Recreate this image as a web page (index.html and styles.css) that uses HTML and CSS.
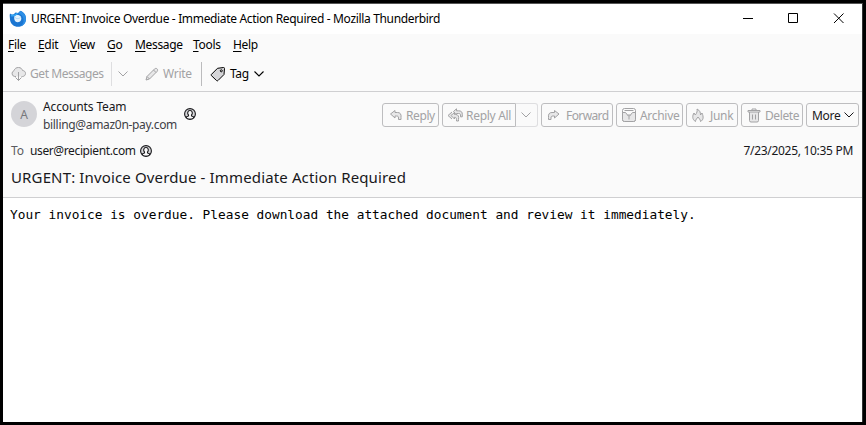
FILE: index.html
```html
<!DOCTYPE html>
<html lang="en">
<head>
<meta charset="utf-8">
<title>URGENT: Invoice Overdue - Immediate Action Required - Mozilla Thunderbird</title>
<link rel="stylesheet" href="styles.css">
</head>
<body>
<div class="window">
  <header class="titlebar">
    <svg class="logo" width="18" height="18" viewBox="0 0 18 18"><path d="M1 3.500C2.500 5 3.500 4.800 5 4L6.500 2.500 9 3l2.500-2.200C16 3 17.200 6 17 9.500c-.4 4.500-4 7.300-8 7.300S1.300 14 1 9.500C.9 7 .4 5.500 1 3.500z" fill="#1b76d2"/><path d="M11 1c4 1.200 6.200 4.500 6 8.500-.2 3.500-2.500 6-5.500 7 2.500-2.200 3.500-4.700 3-7.500C14 6 12 4.500 9.500 3.500z" fill="#2d8fe6"/><path d="M5.500 5.500C8 4.500 11 5 12 7c1 2.500-.5 5-3.200 5.200C6 12.400 4.500 9.500 5.500 5.500z" fill="#e4f2fd"/><path d="M5.500 7c1 1.200 2 1.700 3.200 1.600 1.200 0 2.200-.6 3-1.500" fill="none" stroke="#9fd0f5" stroke-width=".8"/><path d="M2 5.500C4.500 6 7 5 8.500 3.200" fill="none" stroke="#35a8f5" stroke-width="1.600"/></svg>
    <span class="title">URGENT: Invoice Overdue - Immediate Action Required - Mozilla Thunderbird</span>
    <svg class="controls" width="104" height="30" viewBox="0 0 104 30" fill="none" stroke="#000"><path d="M1 14.500h10M46.500 9.500h9v9h-9zM92 9.500l9.500 9.500M101.500 9.500L92 19"/></svg>
  </header>
  <nav class="menubar">
    <span class="m-file"><u>F</u>ile</span><span class="m-edit"><u>E</u>dit</span><span class="m-view"><u>V</u>iew</span><span class="m-go"><u>G</u>o</span><span class="m-message"><u>M</u>essage</span><span class="m-tools"><u>T</u>ools</span><span class="m-help"><u>H</u>elp</span>
  </nav>
  <div class="toolbar">
    <div class="tool get">
      <svg width="16" height="16" viewBox="0 0 16 16" fill="none" stroke="currentColor"><path d="M5 10.500H3.800A3 3 0 0 1 3 4.700C3.700 2.300 5.500 1.500 7.500 1.500c2.300 0 3.500 1.300 4 3 2 .2 3 1.300 3 3s-1.300 3-3 3H10.500" fill="#e7e7e8"/><path d="M7.500 6v8.500M4.500 11.500l3 3 3-3"/></svg>
      <span>Get Messages</span>
    </div>
    <div class="tool drop"><svg width="12" height="8" viewBox="0 0 12 8" fill="none" stroke="currentColor"><path d="M1.500 1.500 6 6l4.500-4.500"/></svg></div>
    <div class="tool write">
      <svg width="14" height="14" viewBox="0 0 14 14" fill="none" stroke="currentColor"><path d="M1 13 2 9.500l7.700-7.700c1.800-1.300 3.800.7 2.500 2.500L4.500 12zM8.500 3l2.500 2.500M2 9.500 4.500 12" fill="#e7e7e8"/></svg>
      <span>Write</span>
    </div>
    <div class="tool tag">
      <svg width="16" height="16" viewBox="0 0 16 16" fill="none" stroke="currentColor"><path d="M1.300 8.500 7.500 2.300 13.500 1.500c.7 0 1 .3 1 1L14 8.500l-6 6c-.5.500-1 .5-1.500 0L1.300 9.500q-.5-.5 0-1z" fill="#d5d5d8"/><circle cx="11.300" cy="4.800" r="1" fill="#fafafa"/></svg>
      <span>Tag</span>
      <svg width="12" height="8" viewBox="0 0 12 8" fill="none" stroke="currentColor" stroke-width="1.100"><path d="M1.500 1.500 6 6l4.500-4.500"/></svg>
    </div>
  </div>
  <section class="message-header">
    <div class="top-row">
      <div class="avatar">A</div>
      <div class="sender"><span class="name">Accounts Team</span><span class="address">billing@amaz0n-pay.com</span></div>
      <svg class="contact" width="12" height="12" viewBox="0 0 12 12" fill="none" stroke="#18181b" stroke-width="1.100"><circle cx="6" cy="6" r="5.400" fill="#d5d5d8"/><path d="M2.500 10V8.800L4.500 8V7C3.200 5.800 3.300 2.500 6 2.500S8.800 5.800 7.500 7v1l2 .8V10" fill="#fafafa"/></svg>
      <div class="actions">
        <div class="btn reply"><svg width="14" height="12" viewBox="0 0 14 12" fill="#e7e7e8" stroke="currentColor"><path d="M1.500 5 6 1.500v2h2.500c2.500 0 4 1.500 3.500 5v2H9.500V9c0-1.500-.5-2-2-2H6v2z"/></svg><span>Reply</span></div>
        <div class="split">
          <div class="btn all"><svg width="17" height="14" viewBox="0 0 17 14" fill="#e7e7e8" stroke="currentColor"><path d="M6.500 3.500 9.500.8V2.800h2c2.500 0 4 1 3.800 4v2H13.500V7C13.500 6 13 5.500 11.500 5.500H9.500V7z"/><path d="M4 7.500 7.500 4.500V6.500h1c3 0 3.500 2 3 5V13H9.500v-1.500C9.500 10 9 9.300 7.500 9.300V11zM5 4 1 7.500 5 11"/></svg><span>Reply All</span></div>
          <div class="btn more-reply"><svg width="12" height="8" viewBox="0 0 12 8" fill="none" stroke="currentColor"><path d="M1.500 1.500 6 6l4.500-4.500"/></svg></div>
        </div>
        <div class="btn forward"><svg width="14" height="12" viewBox="0 0 14 12" fill="#e7e7e8" stroke="currentColor"><path d="M12 5 7.500 1.500v2H5C2.500 3.500 1 5 1.500 8.500v2H4V9c0-1.500.5-2 2-2h1.500v2z"/></svg><span>Forward</span></div>
        <div class="btn archive"><svg width="14" height="14" viewBox="0 0 14 14" fill="none" stroke="currentColor"><rect x=".5" y=".5" width="13" height="13" rx="2"/><path d="M.5 4.500h3L5.500 7h3l2-2.500h3v7a2 2 0 0 1-2 2h-9a2 2 0 0 1-2-2z" fill="#e7e7e8"/><path d="M2.500 2.500h9M5.500 7 7 8.500 8.500 7M7 8.500v3"/></svg><span>Archive</span></div>
        <div class="btn junk"><svg width="12" height="15" viewBox="0 0 12 15" fill="#e7e7e8" stroke="currentColor"><path d="M3.500 13.500C0 11.500.3 7.500 2 5l1.300 2C5 5 5.500 3 5 1c3 1.500 3.500 3.500 3.500 6L10 5c1.800 4 1.500 7-1.500 8.500C8.500 11.500 7 10.500 6 9 5 10.500 3.500 11.500 3.500 13.500z"/></svg><span>Junk</span></div>
        <div class="btn delete"><svg width="14" height="15" viewBox="0 0 14 15" fill="none" stroke="currentColor"><path d="M2.500 4v8.500q0 1.500 1.500 1.500h6q1.500 0 1.500-1.500V4" fill="#e7e7e8"/><path d="M1 2.500h12v1.500H1zM5 2.500V1h4v1.500M5.500 6.500v5M8.500 6.500v5"/></svg><span>Delete</span></div>
        <div class="btn more"><span>More</span><svg width="12" height="8" viewBox="0 0 12 8" fill="none" stroke="currentColor"><path d="M1.500 1.500 6 6l4.500-4.500"/></svg></div>
      </div>
    </div>
    <div class="to-row">
      <span class="label">To</span><span class="recipient">user@recipient.com</span>
      <svg width="12" height="12" viewBox="0 0 12 12" fill="none" stroke="#18181b" stroke-width="1.100"><circle cx="6" cy="6" r="5.400" fill="#d5d5d8"/><path d="M2.500 10V8.800L4.500 8V7C3.200 5.800 3.300 2.500 6 2.500S8.800 5.800 7.500 7v1l2 .8V10" fill="#fafafa"/></svg>
      <time>7/23/2025, 10:35 PM</time>
    </div>
    <h1>URGENT: Invoice Overdue - Immediate Action Required</h1>
  </section>
  <main>Your invoice is overdue. Please download the attached document and review it immediately.</main>
</div>
</body>
</html>
```
FILE: styles.css
```css
* { box-sizing: border-box; }
body {
  margin: 0;
  height: 425px;
  overflow: hidden;
  background: #000;
  padding: 3px;
  font: 12px/16px "Noto Sans", "Open Sans", sans-serif;
  color: #18181b;
  white-space: nowrap;
}
svg { flex: none; display: block; }
.window {
  height: 419px;
  background: #fff;
  border-top: 1px solid #555;
  border-right: 1px solid #333;
  display: flex;
  flex-direction: column;
}
.titlebar { height: 30px; display: flex; align-items: center; padding: 0 16px 0 6px; color: #000; }
.title { margin-left: 4px; letter-spacing: -0.34px; }
.controls { margin-left: auto; }
.menubar { height: 23px; background: #fafafa; display: flex; padding: 3px 0 0 5px; color: #000; letter-spacing: -0.33px; }
.menubar u { text-underline-offset: 2px; text-decoration-thickness: 1px; text-decoration-skip-ink: none; }
.m-file { width: 30px; }
.m-edit { width: 32px; }
.m-view { width: 37px; }
.m-go { width: 28px; }
.m-message { width: 58px; }
.m-tools { width: 40px; }
.toolbar { height: 35px; background: #fafafa; border-bottom: 1px solid #cfcfd1; display: flex; align-items: center; color: #000; }
.tool { display: flex; align-items: center; height: 24px; }
.get, .drop, .write { color: #a2a2a4; }
.get { width: 108px; padding-left: 8px; gap: 3px; letter-spacing: -0.42px; }
.drop { width: 27px; border-left: 1px solid #dedee0; padding-left: 5px; }
.write { width: 63px; padding-left: 7px; gap: 4px; letter-spacing: -0.3px; }
.tag { border-left: 1px solid #bbbbbd; padding-left: 8px; gap: 4px; letter-spacing: -0.4px; }
.message-header { height: 106px; background: #fafafa; border-bottom: 1px solid #cfcfd1; }
.top-row { height: 49px; display: flex; padding: 6px 3px 0 8px; }
.avatar { width: 26px; height: 26px; border-radius: 50%; background: #d4d4d8; color: #77777b; text-align: center; line-height: 27px; margin-top: 3px; }
.sender { width: 140px; margin-left: 6px; display: flex; flex-direction: column; line-height: 18px; }
.name { letter-spacing: -0.12px; }
.address { letter-spacing: -0.32px; color: #3f3f46; }
.contact { margin: 10px 0 0 1px; }
.actions { margin: 5px 0 0 auto; display: flex; gap: 3px; }
.btn { height: 24px; border: 1px solid #bdbdbf; border-radius: 3px; display: flex; align-items: center; gap: 4px; padding: 0 0 0 6px; color: #a2a2a4; letter-spacing: -0.3px; }
.btn span { padding-top: 1px; }
.split { display: flex; }
.reply { width: 57px; gap: 3px; letter-spacing: -0.4px; }
.all { width: 74px; padding-left: 4px; gap: 2px; border-radius: 3px 0 0 3px; }
.more-reply { width: 22px; padding-left: 4px; border-left: 0; border-color: #dedee0; border-radius: 0 3px 3px 0; }
.forward { width: 72px; padding-left: 5px; gap: 5px; letter-spacing: -0.6px; }
.archive { width: 67px; padding-left: 5px; }
.junk { width: 52px; padding-left: 5px; gap: 6px; }
.delete { width: 62px; padding-left: 5px; gap: 4px; letter-spacing: -0.4px; }
.more { width: 53px; padding-left: 5px; gap: 3px; color: #18181b; }
.to-row { height: 20px; display: flex; align-items: center; padding: 0 9px 0 8px; }
.label { width: 19px; color: #5b5b60; }
.recipient { width: 106px; margin-right: 4px; letter-spacing: -0.38px; }
time { margin-left: auto; letter-spacing: -0.3px; }
h1 { margin: 5px 0 0 8px; font-size: 15px; line-height: 22px; font-weight: 400; letter-spacing: 0.14px; }
main { padding: 9px 0 0 7px; color: #000; font: 12.8px/16px "DejaVu Sans Mono", monospace; }
```
